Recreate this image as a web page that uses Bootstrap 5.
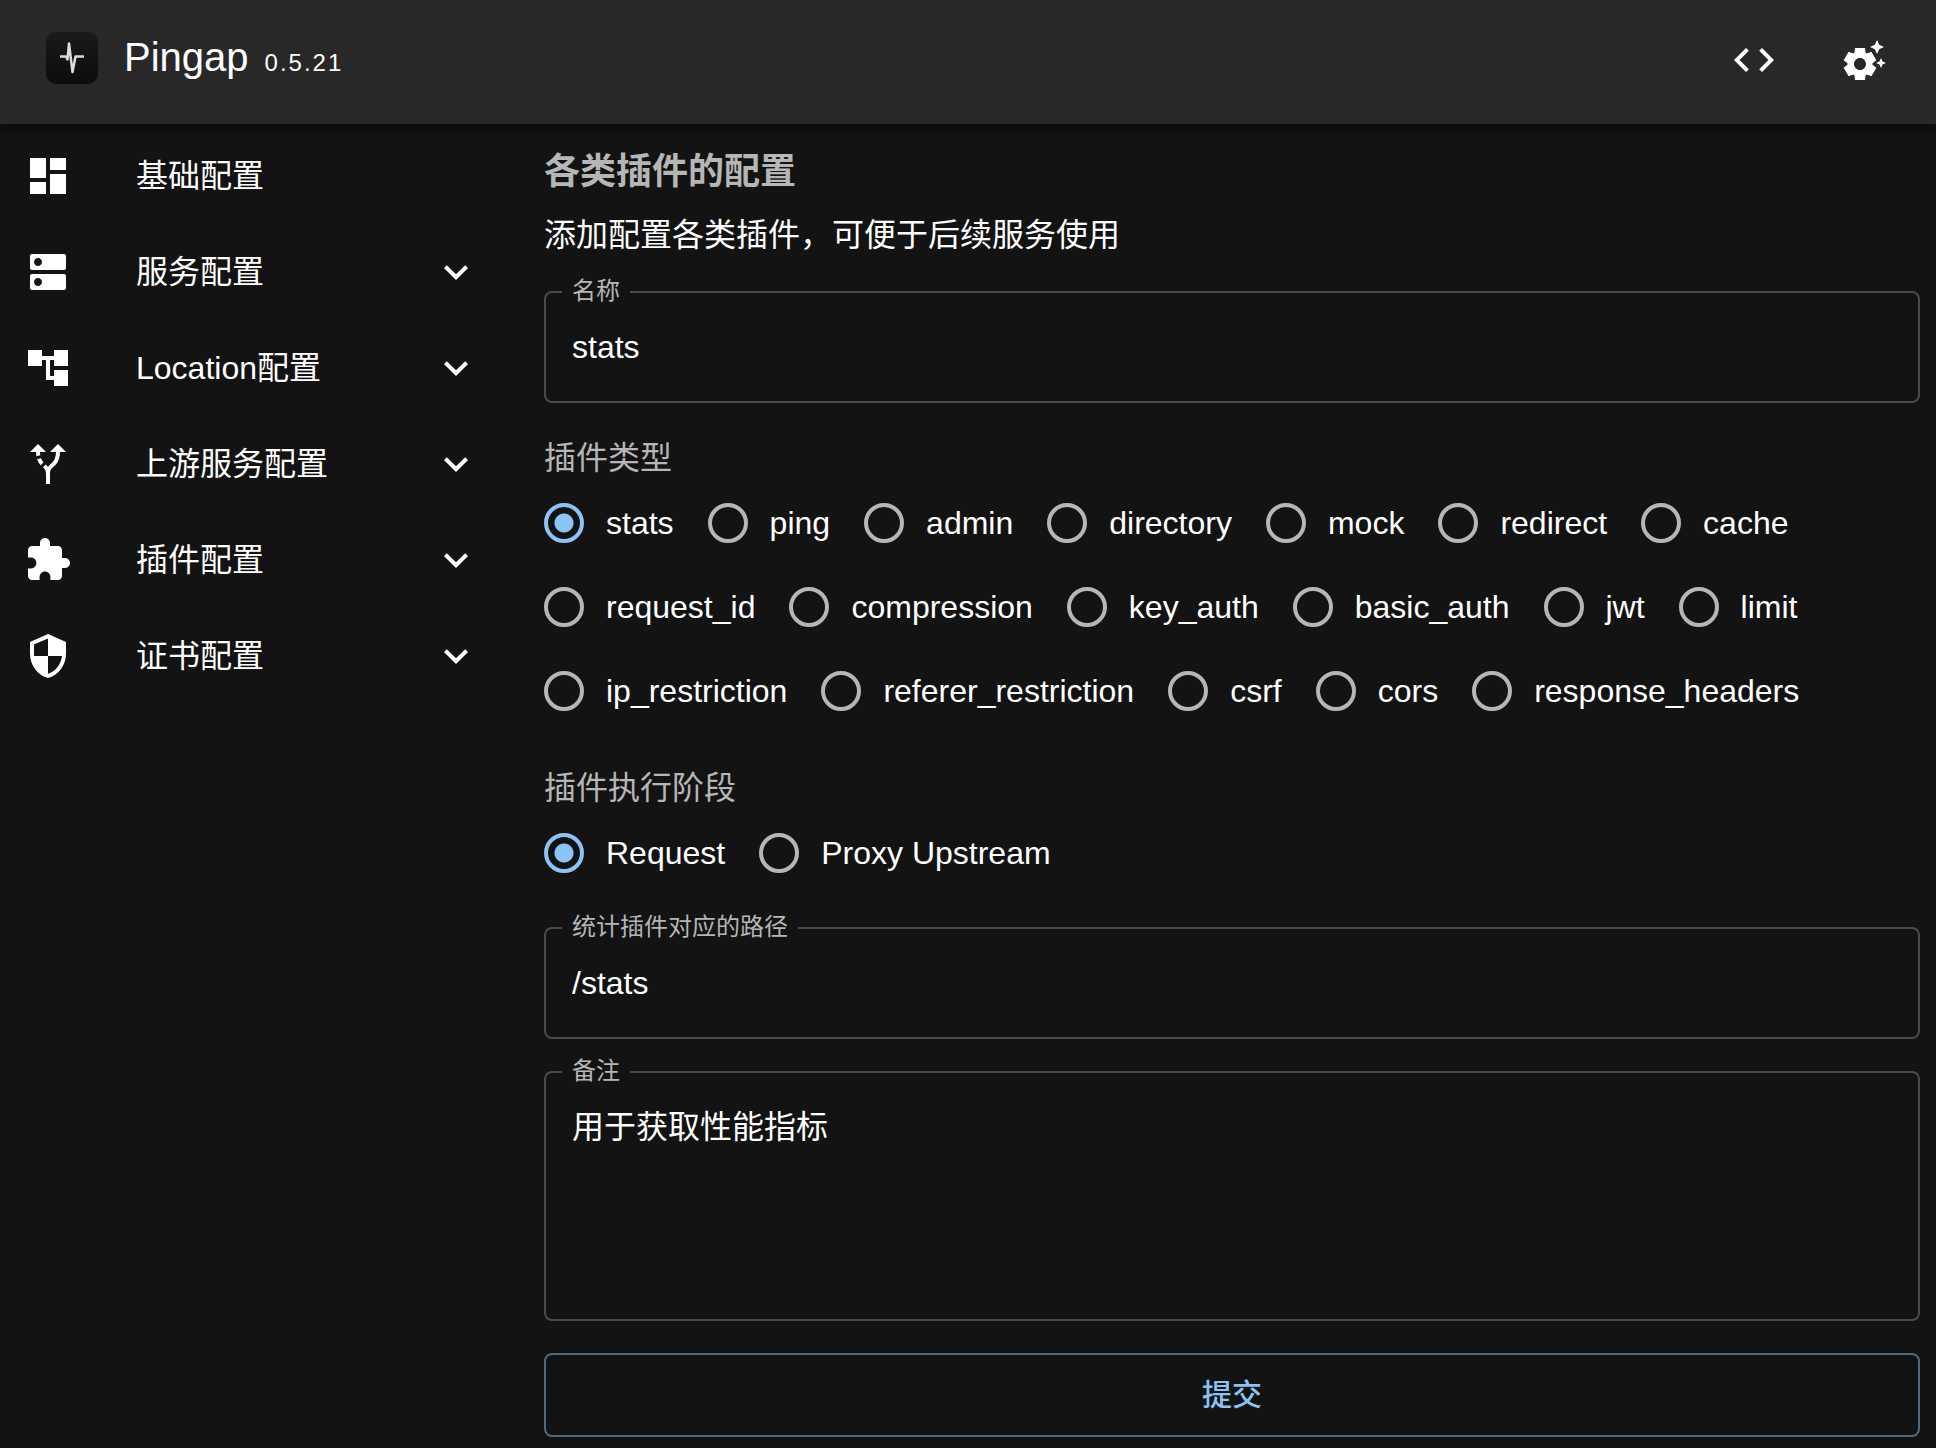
<!DOCTYPE html>
<html lang="zh-CN" data-bs-theme="dark">
<head>
<meta charset="utf-8">
<meta name="viewport" content="width=device-width, initial-scale=1">
<title>Pingap</title>
<link href="https://cdn.jsdelivr.net/npm/bootstrap@5.3.0/dist/css/bootstrap.min.css" rel="stylesheet">
<style>
:root {
  --pg-bg: #131313;
  --pg-bar: #282828;
  --pg-muted: #b6b6b6;
  --pg-line: #4a4a4a;
  --pg-blue: #8ac3f4;
  --pg-blue-line: #4f687b;
}
body {
  background: var(--pg-bg);
  color: #fff;
  font-family: "Liberation Sans", "Noto Sans CJK SC", sans-serif;
  font-size: 32px;
  line-height: 48px;
}
svg { fill: currentColor; display: block; flex: none; }
.icon { width: 48px; height: 48px; }

.topbar {
  background: var(--pg-bar);
  height: 124px;
  padding: 0 48px 4px 45px;
  box-shadow: 0 4px 10px rgba(0, 0, 0, .45);
  z-index: 2;
}
.topbar .brand { gap: 25px; color: #fff; }
.brand svg { margin-bottom: 4px; }
.brand .app-title { font-size: 40px; }
.brand .app-version { font-size: 24px; letter-spacing: 2px; margin-left: 16px; }
.topbar .tools { gap: 62px; }
.plain-btn { background: none; border: 0; padding: 0; color: #fff; }

.sidebar { width: 512px; padding-top: 4px; }
.side-item {
  height: 96px;
  padding: 0 32px 0 24px;
  gap: 64px;
  color: #fff;
  text-decoration: none;
  background: none;
  border: 0;
  text-align: left;
}

.content { padding: 24px 16px 8px 32px; }
.page-title { font-size: 36px; line-height: 48px; font-weight: 700; color: var(--pg-muted); margin: 0 0 15px; }
.form-stack { gap: 32px; }

.outlined { position: relative; }
.outlined > label {
  position: absolute;
  top: -16px;
  left: 18px;
  padding: 0 10px;
  font-size: 24px;
  line-height: 32px;
  color: var(--pg-muted);
  background: var(--pg-bg);
}
.outlined .form-control {
  border: 2px solid var(--pg-line);
  border-radius: 8px;
  background: transparent;
  color: #fff;
  font-size: 32px;
  line-height: 48px;
  padding: 30px 26px;
}
.outlined input.form-control { height: 112px; }
.outlined textarea.form-control { height: 250px; resize: none; }

.radio-set legend { font-size: 32px; line-height: 46px; color: var(--pg-muted); }
.radio-list { column-gap: 34px; }
.radio-item { height: 84px; gap: 22px; }
.radio-item .form-check-input {
  width: 40px;
  height: 40px;
  margin: 0;
  float: none;
  flex: none;
  border: 4px solid var(--pg-muted);
  background: none;
}
.radio-item .form-check-input:checked {
  border-color: var(--pg-blue);
  background: radial-gradient(circle, var(--pg-blue) 9px, transparent 10px);
}

.submit-btn {
  height: 84px;
  border: 2px solid var(--pg-blue-line);
  border-radius: 8px;
  padding: 0 0 2px;
  color: var(--pg-blue);
  font-size: 30px;
  font-weight: 500;
}
</style>
</head>
<body>
<header class="topbar d-flex align-items-center justify-content-between position-relative">
  <a class="brand d-flex align-items-center text-decoration-none" href="#">
    <svg width="54" height="54" viewBox="0 0 54 54" aria-hidden="true">
      <defs><linearGradient id="tile" x1="0" y1="0" x2="0" y2="1"><stop offset="0" stop-color="#1a1a1a"/><stop offset="1" stop-color="#0c0c0c"/></linearGradient></defs>
      <rect x="1" y="1" width="52" height="52" rx="10" fill="url(#tile)"/>
      <path d="M15 25.500h6l1.500 3L24 12.500l3.500 28.500 3-15.500h8.500" fill="none" stroke="#dcdcdc" stroke-width="2.500" stroke-linejoin="round"/>
    </svg>
    <span class="d-flex align-items-baseline"><span class="app-title">Pingap</span><span class="app-version">0.5.21</span></span>
  </a>
  <div class="tools d-flex align-items-center">
    <button class="plain-btn" type="button" aria-label="Code"><svg class="icon" viewBox="0 0 24 24"><path d="M9.4 16.6 4.8 12l4.6-4.6L8 6l-6 6 6 6zm5.200 0 4.600-4.600-4.600-4.600L16 6l6 6-6 6z"/></svg></button>
    <button class="plain-btn" type="button" aria-label="Settings"><svg class="icon" viewBox="0 0 24 24"><path d="M17.410 6.590 15 5.500l2.410-1.090L18.500 2l1.090 2.410L22 5.500l-2.410 1.090L18.500 9zm3.870 6.130L20.500 11l-.78 1.720-1.720.78 1.720.78.78 1.720.78-1.720L23 13.500zm-5.040 1.650 1.940 1.470-2.500 4.330-2.240-.94c-.2.13-.42.26-.64.37l-.3 2.400h-5l-.3-2.410c-.22-.11-.43-.23-.64-.37l-2.240.94-2.500-4.330 1.940-1.470c-.01-.11-.01-.24-.01-.36s0-.25.01-.37l-1.940-1.470 2.500-4.330 2.240.94c.2-.13.42-.26.64-.37L7.500 6h5l.3 2.410c.22.11.43.23.64.37l2.240-.94 2.500 4.330-1.940 1.470c.01.12.01.24.01.37s0 .24-.01.36M13 14c0-1.660-1.340-3-3-3s-3 1.340-3 3 1.340 3 3 3 3-1.340 3-3"/></svg></button>
  </div>
</header>

<div class="d-flex">
  <nav class="sidebar flex-shrink-0 d-flex flex-column">
    <a class="side-item d-flex align-items-center" href="#">
      <svg class="icon" viewBox="0 0 24 24"><path d="M3 13h8V3H3zm0 8h8v-6H3zm10 0h8V11h-8zm0-18v6h8V3z"/></svg>
      <span class="flex-grow-1">基础配置</span>
    </a>
    <button class="side-item d-flex align-items-center" type="button">
      <svg class="icon" viewBox="0 0 24 24"><path d="M20 13H4c-.55 0-1 .45-1 1v6c0 .55.45 1 1 1h16c.55 0 1-.45 1-1v-6c0-.55-.45-1-1-1M7 19c-1.100 0-2-.9-2-2s.9-2 2-2 2 .9 2 2-.9 2-2 2M20 3H4c-.55 0-1 .45-1 1v6c0 .55.45 1 1 1h16c.55 0 1-.45 1-1V4c0-.55-.45-1-1-1M7 9c-1.100 0-2-.9-2-2s.9-2 2-2 2 .9 2 2-.9 2-2 2"/></svg>
      <span class="flex-grow-1">服务配置</span>
      <svg class="icon" viewBox="0 0 24 24"><path d="M16.590 8.590 12 13.170 7.410 8.590 6 10l6 6 6-6z"/></svg>
    </button>
    <button class="side-item d-flex align-items-center" type="button">
      <svg class="icon" viewBox="0 0 24 24"><path d="M22 11V3h-7v3H9V3H2v8h7V8h2v10h4v3h7v-8h-7v3h-2V8h2v3z"/></svg>
      <span class="flex-grow-1">Location配置</span>
      <svg class="icon" viewBox="0 0 24 24"><path d="M16.590 8.590 12 13.170 7.410 8.590 6 10l6 6 6-6z"/></svg>
    </button>
    <button class="side-item d-flex align-items-center" type="button">
      <svg class="icon" viewBox="0 0 24 24"><path d="m9.780 11.160-1.420 1.420c-.68-.69-1.340-1.580-1.790-2.940l1.940-.49c.32.89.77 1.500 1.270 2.010M11 6 7 2 3 6h3.020c.02.81.08 1.540.19 2.170l1.940-.49C8.080 7.200 8.030 6.630 8.020 6zm10 0-4-4-4 4h2.990c-.1 3.680-1.280 4.750-2.540 5.880-.5.44-1.010.92-1.450 1.550-.34-.49-.73-.88-1.130-1.240L9.460 13.600c.93.85 1.540 1.540 1.540 3.400v5h2v-5c0-2.020.71-2.660 1.790-3.630 1.380-1.240 3.080-2.780 3.200-7.370z"/></svg>
      <span class="flex-grow-1">上游服务配置</span>
      <svg class="icon" viewBox="0 0 24 24"><path d="M16.590 8.590 12 13.170 7.410 8.590 6 10l6 6 6-6z"/></svg>
    </button>
    <button class="side-item d-flex align-items-center" type="button">
      <svg class="icon" viewBox="0 0 24 24"><path d="M20.500 11H19V7c0-1.100-.9-2-2-2h-4V3.500C13 2.120 11.880 1 10.500 1S8 2.120 8 3.500V5H4c-1.100 0-1.990.9-1.990 2v3.800H3.500c1.490 0 2.700 1.210 2.700 2.700s-1.210 2.700-2.700 2.700H2V20c0 1.100.9 2 2 2h3.800v-1.500c0-1.490 1.210-2.700 2.700-2.700 1.490 0 2.700 1.210 2.700 2.700V22H17c1.100 0 2-.9 2-2v-4h1.500c1.380 0 2.500-1.120 2.500-2.500S21.880 11 20.500 11"/></svg>
      <span class="flex-grow-1">插件配置</span>
      <svg class="icon" viewBox="0 0 24 24"><path d="M16.590 8.590 12 13.170 7.410 8.590 6 10l6 6 6-6z"/></svg>
    </button>
    <button class="side-item d-flex align-items-center" type="button">
      <svg class="icon" viewBox="0 0 24 24"><path d="M12 1 3 5v6c0 5.550 3.840 10.740 9 12 5.160-1.260 9-6.450 9-12V5zm0 10.990h7c-.53 4.120-3.280 7.790-7 8.940V12H5V6.300l7-3.110z"/></svg>
      <span class="flex-grow-1">证书配置</span>
      <svg class="icon" viewBox="0 0 24 24"><path d="M16.590 8.590 12 13.170 7.410 8.590 6 10l6 6 6-6z"/></svg>
    </button>
  </nav>

  <main class="content flex-grow-1">
    <h1 class="page-title">各类插件的配置</h1>
    <form class="form-stack d-flex flex-column">
      <p class="m-0">添加配置各类插件，可便于后续服务使用</p>
      <div class="outlined">
        <input class="form-control" id="name" type="text" value="stats">
        <label for="name">名称</label>
      </div>
      <fieldset class="radio-set">
        <legend class="float-none m-0">插件类型</legend>
        <div class="radio-list d-flex flex-wrap">
          <label class="radio-item d-flex align-items-center"><input class="form-check-input" type="radio" name="kind" checked>stats</label>
          <label class="radio-item d-flex align-items-center"><input class="form-check-input" type="radio" name="kind">ping</label>
          <label class="radio-item d-flex align-items-center"><input class="form-check-input" type="radio" name="kind">admin</label>
          <label class="radio-item d-flex align-items-center"><input class="form-check-input" type="radio" name="kind">directory</label>
          <label class="radio-item d-flex align-items-center"><input class="form-check-input" type="radio" name="kind">mock</label>
          <label class="radio-item d-flex align-items-center"><input class="form-check-input" type="radio" name="kind">redirect</label>
          <label class="radio-item d-flex align-items-center"><input class="form-check-input" type="radio" name="kind">cache</label>
          <label class="radio-item d-flex align-items-center"><input class="form-check-input" type="radio" name="kind">request_id</label>
          <label class="radio-item d-flex align-items-center"><input class="form-check-input" type="radio" name="kind">compression</label>
          <label class="radio-item d-flex align-items-center"><input class="form-check-input" type="radio" name="kind">key_auth</label>
          <label class="radio-item d-flex align-items-center"><input class="form-check-input" type="radio" name="kind">basic_auth</label>
          <label class="radio-item d-flex align-items-center"><input class="form-check-input" type="radio" name="kind">jwt</label>
          <label class="radio-item d-flex align-items-center"><input class="form-check-input" type="radio" name="kind">limit</label>
          <label class="radio-item d-flex align-items-center"><input class="form-check-input" type="radio" name="kind">ip_restriction</label>
          <label class="radio-item d-flex align-items-center"><input class="form-check-input" type="radio" name="kind">referer_restriction</label>
          <label class="radio-item d-flex align-items-center"><input class="form-check-input" type="radio" name="kind">csrf</label>
          <label class="radio-item d-flex align-items-center"><input class="form-check-input" type="radio" name="kind">cors</label>
          <label class="radio-item d-flex align-items-center"><input class="form-check-input" type="radio" name="kind">response_headers</label>
        </div>
      </fieldset>
      <fieldset class="radio-set">
        <legend class="float-none m-0">插件执行阶段</legend>
        <div class="radio-list d-flex flex-wrap">
          <label class="radio-item d-flex align-items-center"><input class="form-check-input" type="radio" name="step" checked>Request</label>
          <label class="radio-item d-flex align-items-center"><input class="form-check-input" type="radio" name="step">Proxy Upstream</label>
        </div>
      </fieldset>
      <div class="outlined">
        <input class="form-control" id="path" type="text" value="/stats">
        <label for="path">统计插件对应的路径</label>
      </div>
      <div class="outlined">
        <textarea class="form-control" id="remark">用于获取性能指标</textarea>
        <label for="remark">备注</label>
      </div>
      <button class="btn submit-btn w-100" type="button">提交</button>
    </form>
  </main>
</div>
<script src="https://cdn.jsdelivr.net/npm/bootstrap@5.3.0/dist/js/bootstrap.bundle.min.js"></script>
</body>
</html>
